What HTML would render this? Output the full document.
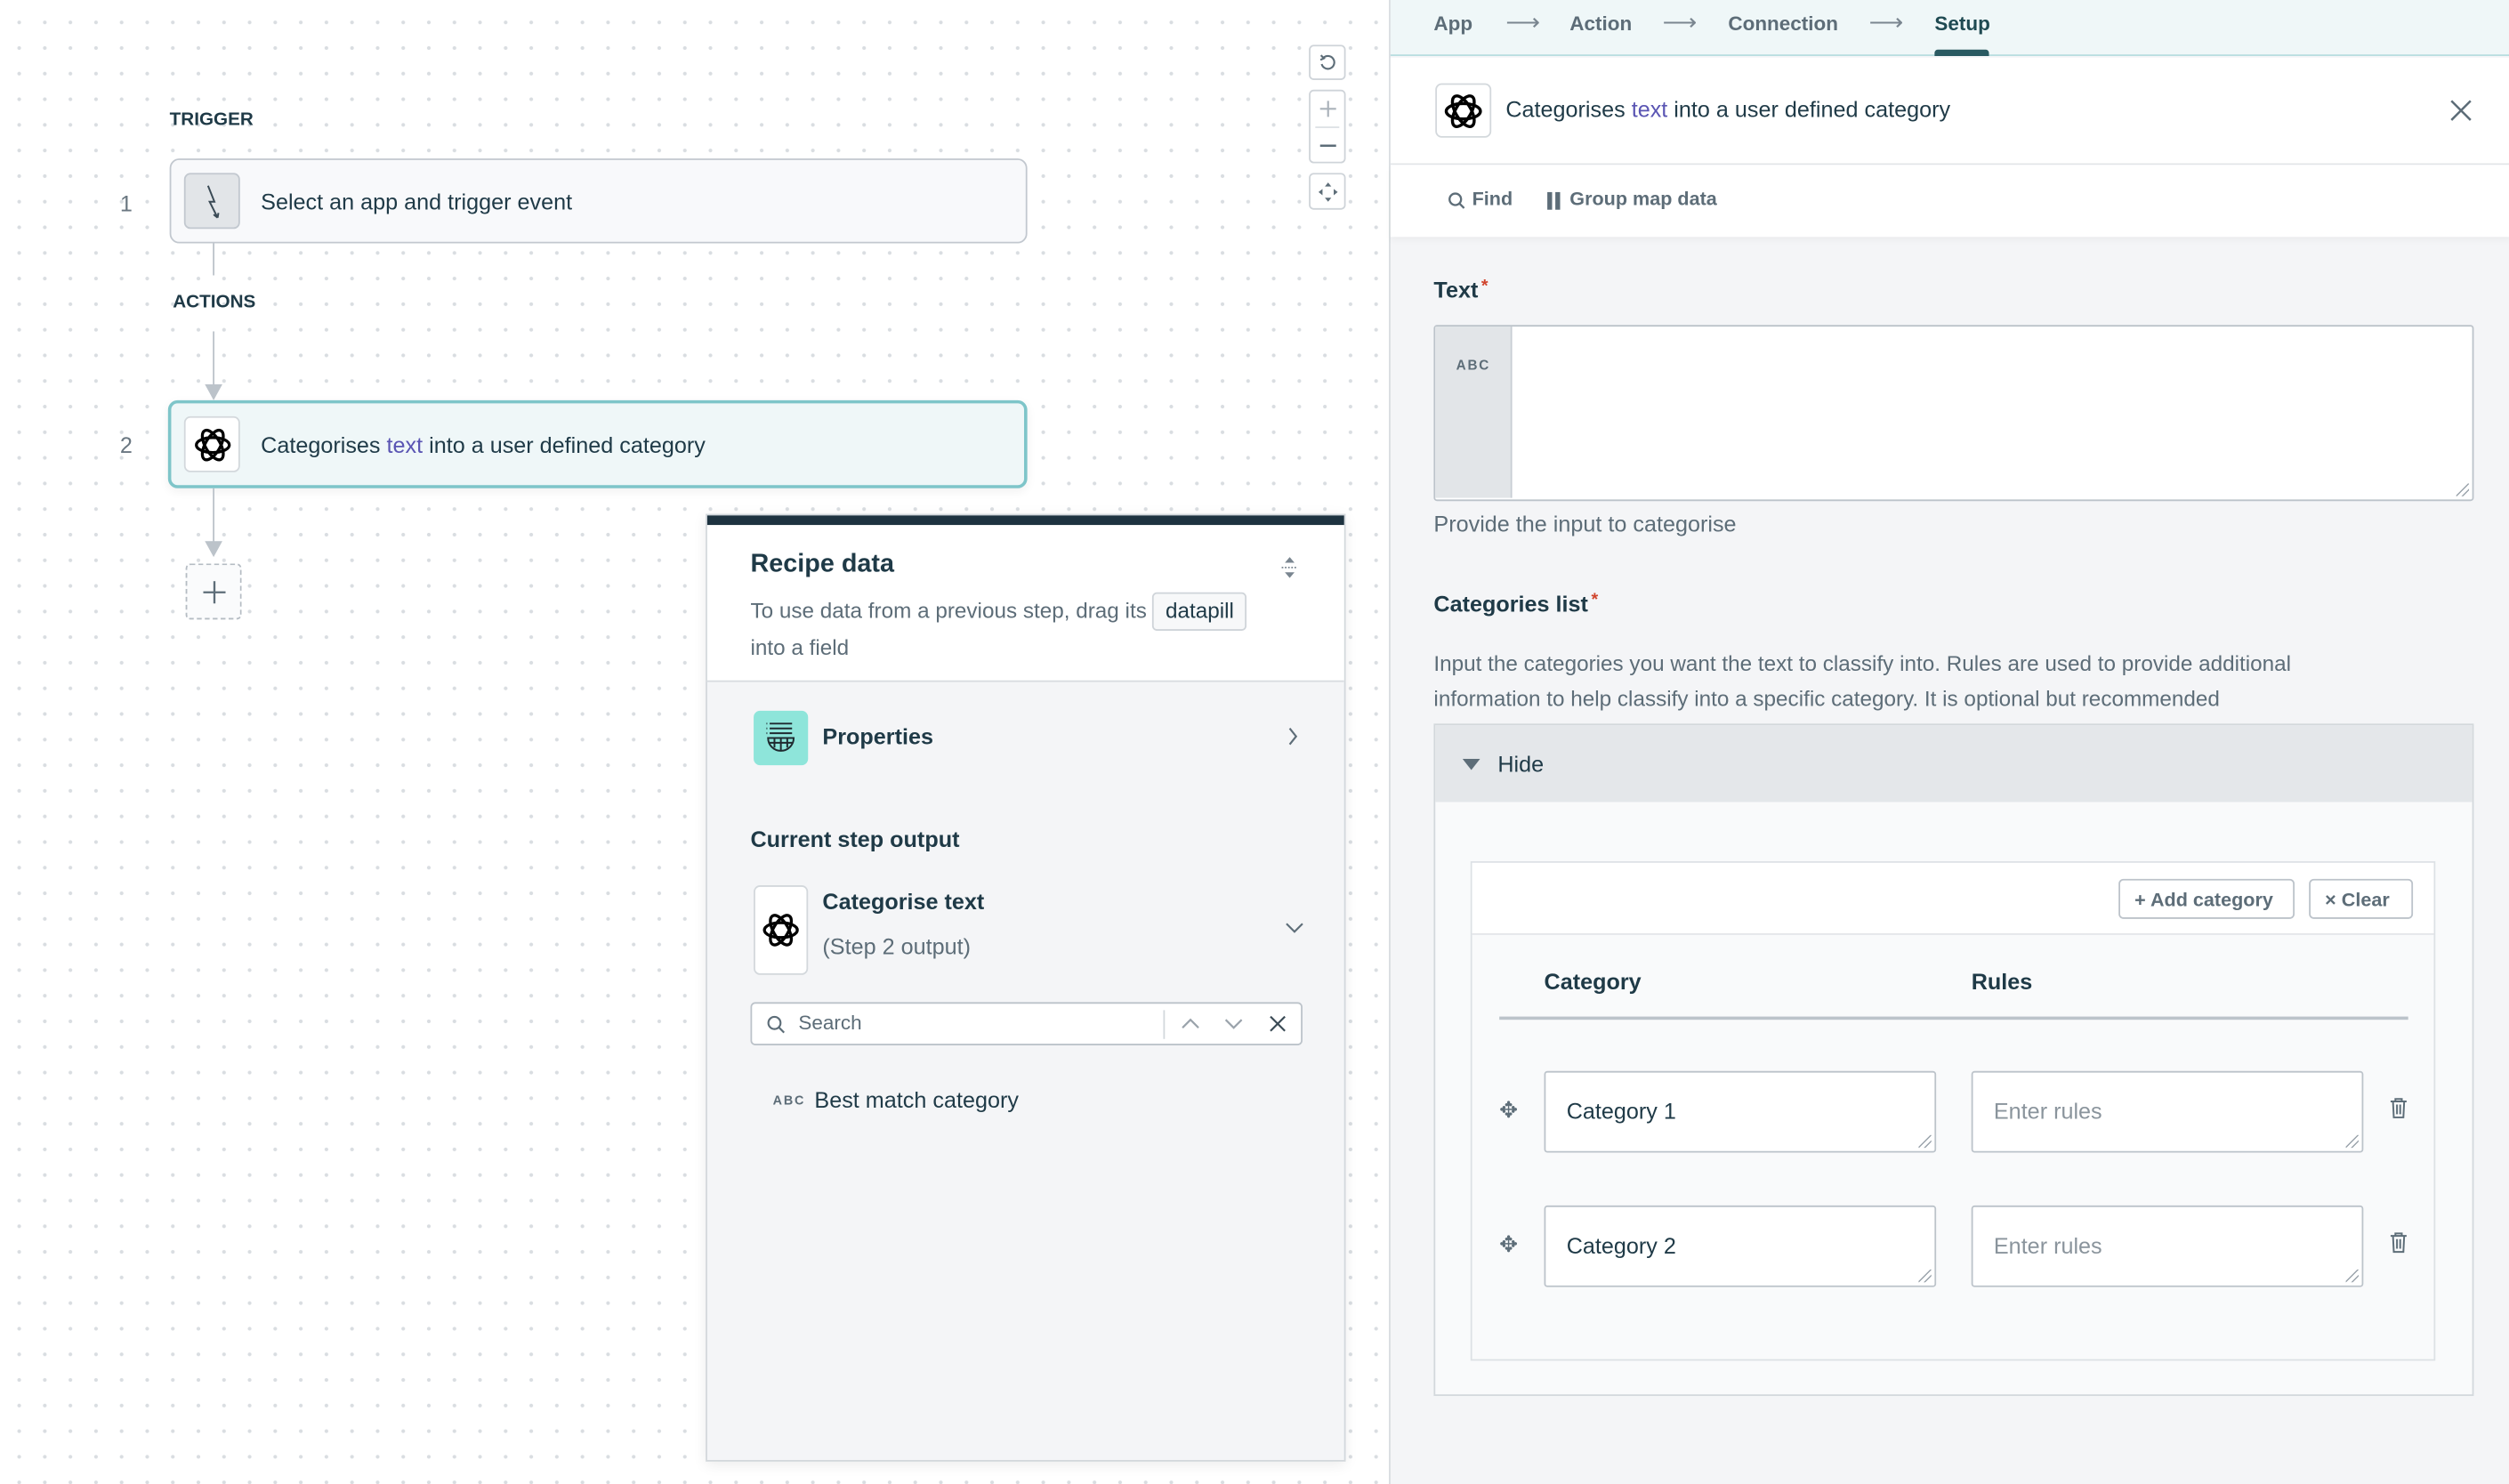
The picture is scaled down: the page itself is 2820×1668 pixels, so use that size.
<!DOCTYPE html>
<html><head><meta charset="utf-8">
<style>
*{box-sizing:border-box;margin:0;padding:0}
html,body{width:2820px;height:1668px;overflow:hidden;background:#fff}
#w{position:absolute;left:0;top:0;width:1568px;height:927px;transform:scale(1.79847,1.79935);transform-origin:0 0;font-family:"Liberation Sans",sans-serif;color:#1f3a47}
.a{position:absolute}
.canvas{left:0;top:0;width:868px;height:927px;background-color:#fff;background-image:radial-gradient(circle,#d9dde1 1px,transparent 1.3px);background-size:16px 16px;background-position:4px 6px}
.lbl{font-size:11.5px;font-weight:bold;color:#1f3a47}
.num{font-size:14px;color:#6a7781}
.card{border-radius:6px;display:flex;align-items:center}
.ico{width:35px;height:35px;border-radius:4px;display:flex;align-items:center;justify-content:center}
.t14{font-size:14px}
.mut{color:#5d6d78}
.pur{color:#5a55b3}
.vl{width:1px;background:#bcc3ca}
.ctl{border:1px solid #cfd4d9;border-radius:3px;background:#fff;width:23px}
.inp{background:#fff;border:1px solid #bcc3ca;border-radius:2px}
.grip{position:absolute;right:2px;bottom:2px;width:8px;height:8px;background:linear-gradient(135deg,transparent 45%,#9aa3ab 45%,#9aa3ab 52%,transparent 52%,transparent 70%,#9aa3ab 70%,#9aa3ab 77%,transparent 77%)}
</style></head><body><div id="w">

<div class="a canvas"></div>

<div class="a lbl" style="left:106px;top:69px">TRIGGER</div>
<div class="a num" style="left:75px;top:119px">1</div>
<div class="a card" style="left:106px;top:99px;width:536px;height:53px;background:#f8f9fb;border:1.5px solid #c2c8cf">
 <div class="ico" style="margin-left:8px;background:#e2e5e8;border:1px solid #c2c8cf">
  <svg width="16" height="24" viewBox="0 0 16 24"><path d="M5 2 L9 12 L6 12 L11 22 M11 22 L8.5 20 M11 22 L11.5 19" fill="none" stroke="#3a4a55" stroke-width="1.1"/></svg>
 </div>
 <div class="t14" style="margin-left:13px">Select an app and trigger event</div>
</div>
<div class="a vl" style="left:133px;top:152px;height:20px"></div>
<div class="a lbl" style="left:108px;top:183px">ACTIONS</div>
<div class="a vl" style="left:133px;top:207px;height:36px"></div>
<svg class="a" style="left:128px;top:240px" width="11" height="10"><path d="M0 0 L11 0 L5.5 10Z" fill="#bcc3ca"/></svg>
<div class="a num" style="left:75px;top:270px">2</div>
<div class="a card" style="left:105px;top:250px;width:537px;height:55px;background:#eff7f8;border:2px solid #7ec5c9;box-shadow:0 2px 6px rgba(0,0,0,.06)">
 <div class="ico" style="margin-left:8px;background:#fff;border:1px solid #d3d8dc">
  <svg width="26" height="26" viewBox="0 0 24 24"><g fill="none" stroke="#000" stroke-width="1.7"><ellipse cx="12" cy="12" rx="9.5" ry="4.3"/><ellipse cx="12" cy="12" rx="9.5" ry="4.3" transform="rotate(60 12 12)"/><ellipse cx="12" cy="12" rx="9.5" ry="4.3" transform="rotate(120 12 12)"/></g></svg>
 </div>
 <div class="t14" style="margin-left:13px">Categorises <span class="pur">text</span> into a user defined category</div>
</div>
<div class="a vl" style="left:133px;top:305px;height:34px"></div>
<svg class="a" style="left:128px;top:338px" width="11" height="10"><path d="M0 0 L11 0 L5.5 10Z" fill="#bcc3ca"/></svg>
<div class="a" style="left:116px;top:352px;width:35px;height:35px;border:1px dashed #b5bcc3;border-radius:3px;background:#fafbfc;display:flex;align-items:center;justify-content:center">
 <svg width="14" height="14"><path d="M7 0V14M0 7H14" stroke="#5d6d78" stroke-width="1.3"/></svg>
</div>

<div class="a ctl" style="left:818px;top:28px;height:22px;display:flex;align-items:center;justify-content:center"><svg width="12" height="12" viewBox="0 0 12 12"><path d="M3 3.2 A4 4 0 1 1 2 7" fill="none" stroke="#5d6d78" stroke-width="1.2"/><path d="M1.5 1.5 L3.4 3.4 L1.2 4.4" fill="none" stroke="#5d6d78" stroke-width="1.2"/></svg></div>
<div class="a ctl" style="left:818px;top:56px;height:46px">
 <svg class="a" style="left:5px;top:5px" width="12" height="12"><path d="M6 1V11M1 6H11" stroke="#aab2ba" stroke-width="1.2"/></svg>
 <div class="a" style="left:3px;top:22px;width:15px;height:1px;background:#dde1e5"></div>
 <svg class="a" style="left:5px;top:28px" width="12" height="12"><path d="M1 6H11" stroke="#5d6d78" stroke-width="1.4"/></svg>
</div>
<div class="a ctl" style="left:818px;top:108px;height:23px"><svg class="a" style="left:4px;top:4px" width="14" height="14"><path d="M7 1L9 3.5H5ZM7 13L9 10.5H5ZM1 7L3.5 5V9ZM13 7L10.5 5V9Z" fill="#5d6d78"/></svg></div>

<!-- Recipe data panel -->
<div class="a" style="left:441px;top:321px;width:400px;height:592px;background:#f4f5f7;border:1px solid #d3d8dc;box-shadow:0 2px 8px rgba(0,0,0,.08)">
 <div class="a" style="left:0;top:0;width:398px;height:6px;background:#1e3340"></div>
 <div class="a" style="left:0;top:6px;width:398px;height:98px;background:#fff;border-bottom:1.5px solid #d8dce0"></div>
 <div class="a" style="left:27px;top:22px;font-size:16px;font-weight:bold">Recipe data</div>
 <svg class="a" style="left:358px;top:26px" width="12" height="13"><path d="M6 0L9 3.5H3ZM6 13L9 9.5H3Z" fill="#7a8690"/><path d="M1 6.5H11" stroke="#7a8690" stroke-dasharray="1 1"/></svg>
 <div class="a mut" style="left:27px;top:48px;font-size:13.5px;line-height:22px;width:350px">To use data from a previous step, drag its <span style="display:inline-block;border:1px solid #cfd4d9;border-radius:3px;padding:0 7px;background:#f7f8f9;color:#1f3a47;line-height:22px">datapill</span><br>into a field</div>
 <div class="a" style="left:29px;top:122px;width:34px;height:34px;background:#8ee5da;border-radius:4px">
  <svg class="a" style="left:7px;top:6px" width="20" height="22" viewBox="0 0 20 22"><g stroke="#1f2a30" stroke-width="1.1" fill="none"><path d="M3 2H17M3 5H17M3 8H17M1 2h.5M1 5h.5M1 8h.5"/><path d="M2 11H18A8 8 0 0 1 2 11Z"/><path d="M6 11V17M10 11V19M14 11V17M3 14H17"/></g></svg>
 </div>
 <div class="a" style="left:72px;top:130px;font-size:14px;font-weight:bold">Properties</div>
 <svg class="a" style="left:362px;top:132px" width="8" height="12"><path d="M2 1L6 6L2 11" fill="none" stroke="#5d6d78" stroke-width="1.2"/></svg>
 <div class="a" style="left:27px;top:194px;font-size:14px;font-weight:bold">Current step output</div>
 <div class="a" style="left:29px;top:231px;width:34px;height:56px;background:#fff;border:1px solid #d3d8dc;border-radius:4px">
  <svg class="a" style="left:3px;top:14px" width="26" height="26" viewBox="0 0 24 24"><g fill="none" stroke="#000" stroke-width="1.7"><ellipse cx="12" cy="12" rx="9.5" ry="4.3"/><ellipse cx="12" cy="12" rx="9.5" ry="4.3" transform="rotate(60 12 12)"/><ellipse cx="12" cy="12" rx="9.5" ry="4.3" transform="rotate(120 12 12)"/></g></svg>
 </div>
 <div class="a" style="left:72px;top:233px;font-size:14px;font-weight:bold">Categorise text</div>
 <div class="a mut" style="left:72px;top:261px;font-size:14px">(Step 2 output)</div>
 <svg class="a" style="left:361px;top:254px" width="12" height="8"><path d="M1 1L6 6L11 1" fill="none" stroke="#5d6d78" stroke-width="1.2"/></svg>
 <div class="a inp" style="left:27px;top:304px;width:345px;height:27px;border-radius:3px">
  <svg class="a" style="left:9px;top:7px" width="12" height="12"><circle cx="5" cy="5" r="3.8" fill="none" stroke="#5d6d78" stroke-width="1.2"/><path d="M8 8L11 11" stroke="#5d6d78" stroke-width="1.2"/></svg>
  <div class="a mut" style="left:29px;top:5px;font-size:12.5px">Search</div>
  <div class="a" style="left:257px;top:4px;width:1px;height:18px;background:#d3d8dc"></div>
  <svg class="a" style="left:268px;top:8px" width="12" height="8"><path d="M1 7L6 2L11 7" fill="none" stroke="#9aa3ab" stroke-width="1.2"/></svg>
  <svg class="a" style="left:295px;top:9px" width="12" height="8"><path d="M1 1L6 6L11 1" fill="none" stroke="#9aa3ab" stroke-width="1.2"/></svg>
  <svg class="a" style="left:323px;top:7px" width="11" height="11"><path d="M1 1L10 10M10 1L1 10" stroke="#3a4a55" stroke-width="1.2"/></svg>
 </div>
 <div class="a" style="left:41px;top:361px;font-size:8px;font-weight:bold;color:#5d6d78;letter-spacing:1px">ABC</div>
 <div class="a" style="left:67px;top:357px;font-size:14px">Best match category</div>
</div>

<!-- Right panel -->
<div class="a" style="left:868px;top:0;width:700px;height:927px;background:#f4f5f7;border-left:1px solid #d8dce0">
 <div class="a" style="left:0;top:0;width:700px;height:35px;background:#eff7f8;border-bottom:1.5px solid #b9dde0"></div>
 <div class="a" style="left:27px;top:8px;font-size:12.5px;font-weight:bold;color:#5d6d78">App</div>
 <div class="a" style="left:72px;top:5px;font-size:15px;color:#7a8690">⟶</div>
 <div class="a" style="left:112px;top:8px;font-size:12.5px;font-weight:bold;color:#5d6d78">Action</div>
 <div class="a" style="left:170px;top:5px;font-size:15px;color:#7a8690">⟶</div>
 <div class="a" style="left:211px;top:8px;font-size:12.5px;font-weight:bold;color:#5d6d78">Connection</div>
 <div class="a" style="left:299px;top:5px;font-size:15px;color:#7a8690">⟶</div>
 <div class="a" style="left:340px;top:8px;font-size:12.5px;font-weight:bold;color:#1f4a52">Setup</div>
 <div class="a" style="left:340px;top:31px;width:34px;height:4px;background:#2a5a62;border-radius:2px 2px 0 0"></div>

 <div class="a" style="left:0;top:36px;width:700px;height:67px;background:#fff;border-bottom:1.5px solid #e3e6e9"></div>
 <div class="a" style="left:28px;top:52px;width:35px;height:34px;background:#fff;border:1px solid #d3d8dc;border-radius:4px">
  <svg class="a" style="left:3px;top:3px" width="27" height="27" viewBox="0 0 24 24"><g fill="none" stroke="#000" stroke-width="1.7"><ellipse cx="12" cy="12" rx="9.5" ry="4.3"/><ellipse cx="12" cy="12" rx="9.5" ry="4.3" transform="rotate(60 12 12)"/><ellipse cx="12" cy="12" rx="9.5" ry="4.3" transform="rotate(120 12 12)"/></g></svg>
 </div>
 <div class="a" style="left:72px;top:60px;font-size:14px">Categorises <span class="pur">text</span> into a user defined category</div>
 <svg class="a" style="left:662px;top:62px" width="14" height="14"><path d="M1 1L13 13M13 1L1 13" stroke="#5d6d78" stroke-width="1.4"/></svg>

 <div class="a" style="left:0;top:103px;width:700px;height:45px;background:#fff;box-shadow:0 2px 4px rgba(0,0,0,.04)"></div>
 <svg class="a" style="left:36px;top:120px" width="11" height="11"><circle cx="4.5" cy="4.5" r="3.6" fill="none" stroke="#5d6d78" stroke-width="1.3"/><path d="M7 7L10 10" stroke="#5d6d78" stroke-width="1.3"/></svg>
 <div class="a" style="left:51px;top:117px;font-size:12px;font-weight:bold;color:#5d6d78">Find</div>
 <div class="a" style="left:98px;top:120px;width:3px;height:11px;background:#5d6d78"></div>
 <div class="a" style="left:103px;top:120px;width:3px;height:11px;background:#5d6d78"></div>
 <div class="a" style="left:112px;top:117px;font-size:12px;font-weight:bold;color:#5d6d78">Group map data</div>

 <div class="a" style="left:27px;top:173px;font-size:14px;font-weight:bold">Text<span style="color:#d0442c;font-size:11px;vertical-align:top;margin-left:2px">*</span></div>
 <div class="a inp" style="left:27px;top:203px;width:650px;height:110px;border-width:1.5px">
  <div class="a" style="left:0;top:0;width:48px;height:107px;background:#e2e5e8;border-right:1px solid #c8ced4"></div>
  <div class="a" style="left:13px;top:19px;font-size:8.5px;font-weight:bold;color:#5d6d78;letter-spacing:1px">ABC</div>
  <div class="grip"></div>
 </div>
 <div class="a mut" style="left:27px;top:319px;font-size:14px">Provide the input to categorise</div>

 <div class="a" style="left:27px;top:369px;font-size:14px;font-weight:bold">Categories list<span style="color:#d0442c;font-size:11px;vertical-align:top;margin-left:2px">*</span></div>
 <div class="a mut" style="left:27px;top:404px;font-size:13.5px;line-height:22px;width:590px">Input the categories you want the text to classify into. Rules are used to provide additional information to help classify into a specific category. It is optional but recommended</div>

 <div class="a" style="left:27px;top:452px;width:650px;height:420px;background:#f9fafb;border:1px solid #d3d8dc">
  <div class="a" style="left:0;top:0;width:648px;height:48px;background:#e4e7ea"></div>
  <svg class="a" style="left:17px;top:21px" width="11" height="7"><path d="M0 0H11L5.5 7Z" fill="#5d6d78"/></svg>
  <div class="a" style="left:39px;top:16px;font-size:14px">Hide</div>
  <div class="a" style="left:22px;top:85px;width:603px;height:312px;background:#f9fafb;border:1px solid #dde1e5">
   <div class="a" style="left:0;top:0;width:601px;height:45px;background:#fff;border-bottom:1.5px solid #e3e6e9"></div>
   <div class="a" style="left:404px;top:10px;width:110px;height:25px;border:1px solid #bcc3ca;border-radius:3px;background:#fff;font-size:12px;font-weight:bold;color:#5d6d78;padding:5px 0 0 9px">+ Add category</div>
   <div class="a" style="left:523px;top:10px;width:65px;height:25px;border:1px solid #bcc3ca;border-radius:3px;background:#fff;font-size:12px;font-weight:bold;color:#5d6d78;padding:5px 0 0 9px">× Clear</div>
   <div class="a" style="left:45px;top:66px;font-size:14px;font-weight:bold">Category</div>
   <div class="a" style="left:312px;top:66px;font-size:14px;font-weight:bold">Rules</div>
   <div class="a" style="left:17px;top:96px;width:568px;height:1.5px;background:#bcc3ca"></div>

   <div class="a" style="left:17px;top:146px;font-size:14px;color:#5d6d78">✥</div>
   <div class="a inp" style="left:45px;top:130px;width:245px;height:51px"><div class="a" style="left:13px;top:16px;font-size:14px">Category 1</div><div class="grip"></div></div>
   <div class="a inp" style="left:312px;top:130px;width:245px;height:51px"><div class="a" style="left:13px;top:16px;font-size:14px;color:#8a949c">Enter rules</div><div class="grip"></div></div>
   <svg class="a" style="left:573px;top:146px" width="12" height="14"><path d="M1 3H11M4 3V1.5H8V3M2.5 3L3 13H9L9.5 3M5 5V11M7 5V11" fill="none" stroke="#5d6d78" stroke-width="1.1"/></svg>

   <div class="a" style="left:17px;top:230px;font-size:14px;color:#5d6d78">✥</div>
   <div class="a inp" style="left:45px;top:214px;width:245px;height:51px"><div class="a" style="left:13px;top:16px;font-size:14px">Category 2</div><div class="grip"></div></div>
   <div class="a inp" style="left:312px;top:214px;width:245px;height:51px"><div class="a" style="left:13px;top:16px;font-size:14px;color:#8a949c">Enter rules</div><div class="grip"></div></div>
   <svg class="a" style="left:573px;top:230px" width="12" height="14"><path d="M1 3H11M4 3V1.5H8V3M2.5 3L3 13H9L9.5 3M5 5V11M7 5V11" fill="none" stroke="#5d6d78" stroke-width="1.1"/></svg>
  </div>
 </div>
</div>

</div></body></html>
